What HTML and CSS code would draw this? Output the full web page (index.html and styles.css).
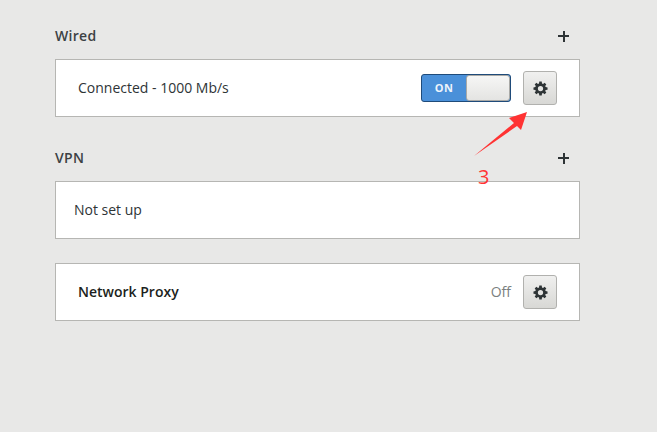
FILE: index.html
```html
<!DOCTYPE html>
<html lang="en">
<head>
    <meta charset="UTF-8">
    <title>Network</title>
    <link rel="stylesheet" href="styles.css">
</head>
<body>
    <div class="panel">
        <div class="section-head">
            <h2>Wired</h2>
            <span class="add"></span>
        </div>
        <div class="card">
            <span class="status">Connected - 1000 Mb/s</span>
            <div class="controls">
                <div class="switch">
                    <span class="switch-on">ON</span>
                    <span class="switch-knob"></span>
                </div>
                <button class="gear-btn">
                    <svg width="15" height="15" viewBox="0 0 16 16"><path fill-rule="evenodd" fill="#2e3436" d="M6.7.6h2.6l.3 2 1.1.5 1.7-1.2 1.8 1.8-1.2 1.7.5 1.1 2 .3v2.4l-2 .3-.5 1.1 1.2 1.7-1.8 1.8-1.7-1.2-1.1.5-.3 2H6.7l-.3-2-1.1-.5-1.7 1.2-1.8-1.8L3 10.6l-.5-1.1-2-.3V6.8l2-.3.5-1.1-1.2-1.700 1.8-1.8 1.7 1.2 1.1-.5zM8 5.2a2.8 2.8 0 1 0 0 5.600a2.8 2.8 0 0 0 0-5.600z"/></svg>
                </button>
            </div>
        </div>

        <div class="section-head vpn-head">
            <h2>VPN</h2>
            <span class="add"></span>
        </div>
        <div class="card card-vpn">
            <span class="status">Not set up</span>
        </div>

        <div class="card card-proxy">
            <span class="proxy-name">Network Proxy</span>
            <div class="controls">
                <span class="off">Off</span>
                <button class="gear-btn">
                    <svg width="15" height="15" viewBox="0 0 16 16"><path fill-rule="evenodd" fill="#2e3436" d="M6.7.6h2.6l.3 2 1.1.5 1.7-1.2 1.8 1.8-1.2 1.7.5 1.1 2 .3v2.4l-2 .3-.5 1.1 1.2 1.7-1.8 1.8-1.7-1.2-1.1.5-.3 2H6.7l-.3-2-1.1-.5-1.7 1.2-1.8-1.8L3 10.6l-.5-1.1-2-.3V6.8l2-.3.5-1.1-1.2-1.700 1.8-1.8 1.7 1.2 1.1-.5zM8 5.2a2.8 2.8 0 1 0 0 5.600a2.8 2.8 0 0 0 0-5.600z"/></svg>
                </button>
            </div>
        </div>
    </div>

    <!-- annotation on top of the screenshot -->
    <svg class="arrow" width="70" height="60" viewBox="0 0 70 60"><path fill="#ff3333" d="M1 46 L41 13 L36 8 L54 2 L48 20 L44 16 Z"/></svg>
    <span class="note">3</span>
</body>
</html>
```

FILE: styles.css
```css
* {
    box-sizing: border-box;
    margin: 0;
    padding: 0;
}

body {
    font-family: 'Open Sans', 'Noto Sans', sans-serif;
    background: #e8e8e7;
    height: 432px;
    width: 657px;
    overflow: hidden;
    position: relative;
}

.panel {
    width: 525px;
    margin-left: 55px;
    padding-top: 27px;
}

.section-head {
    display: flex;
    align-items: center;
    justify-content: space-between;
    height: 18px;
    margin-bottom: 14px;
    padding-right: 11px;
}

.vpn-head {
    margin-top: 32px;
}

h2 {
    font-size: 14px;
    font-weight: 600;
    letter-spacing: 0.3px;
    color: #3c4144;
    margin-bottom: 2px;
}

.add {
    width: 11px;
    height: 11px;
    background:
        linear-gradient(#2e3436, #2e3436) center / 11px 2px no-repeat,
        linear-gradient(#2e3436, #2e3436) center / 2px 11px no-repeat;
}

.card {
    height: 58px;
    background: #fff;
    border: 1px solid #b6b6b3;
    display: flex;
    align-items: center;
    justify-content: space-between;
    padding: 0 22px;
    font-size: 14px;
    color: #2e3436;
}

.card-vpn {
    padding-left: 18px;
}

.card-proxy {
    margin-top: 24px;
}

.status,
.proxy-name,
.off {
    margin-bottom: 2px;
}

.proxy-name {
    font-weight: 600;
    color: #1c1f20;
}

.controls {
    display: flex;
    align-items: center;
    gap: 12px;
}

.switch {
    width: 90px;
    height: 28px;
    display: flex;
    border: 1px solid #1f4b7a;
    border-radius: 3px;
    background: #4a90d9;
}

.switch-on {
    width: 44px;
    color: #eef4fb;
    font-size: 11px;
    font-weight: 700;
    letter-spacing: 0.3px;
    line-height: 26px;
    text-align: center;
}

.switch-knob {
    flex: 1;
    background: linear-gradient(#f6f6f5, #e4e4e2);
    border: 1px solid #a9a9a6;
    border-radius: 3px;
}

.gear-btn {
    width: 34px;
    height: 34px;
    display: flex;
    align-items: center;
    justify-content: center;
    border: 1px solid #b1b1ae;
    border-radius: 3px;
    background: linear-gradient(#f0f0ef, #d8d8d5);
}

.off {
    color: #7b7f80;
}

.arrow {
    position: absolute;
    left: 473px;
    top: 110px;
}

.note {
    position: absolute;
    left: 478px;
    top: 164px;
    font-size: 20px;
    line-height: 26px;
    color: #ff3333;
}
```
